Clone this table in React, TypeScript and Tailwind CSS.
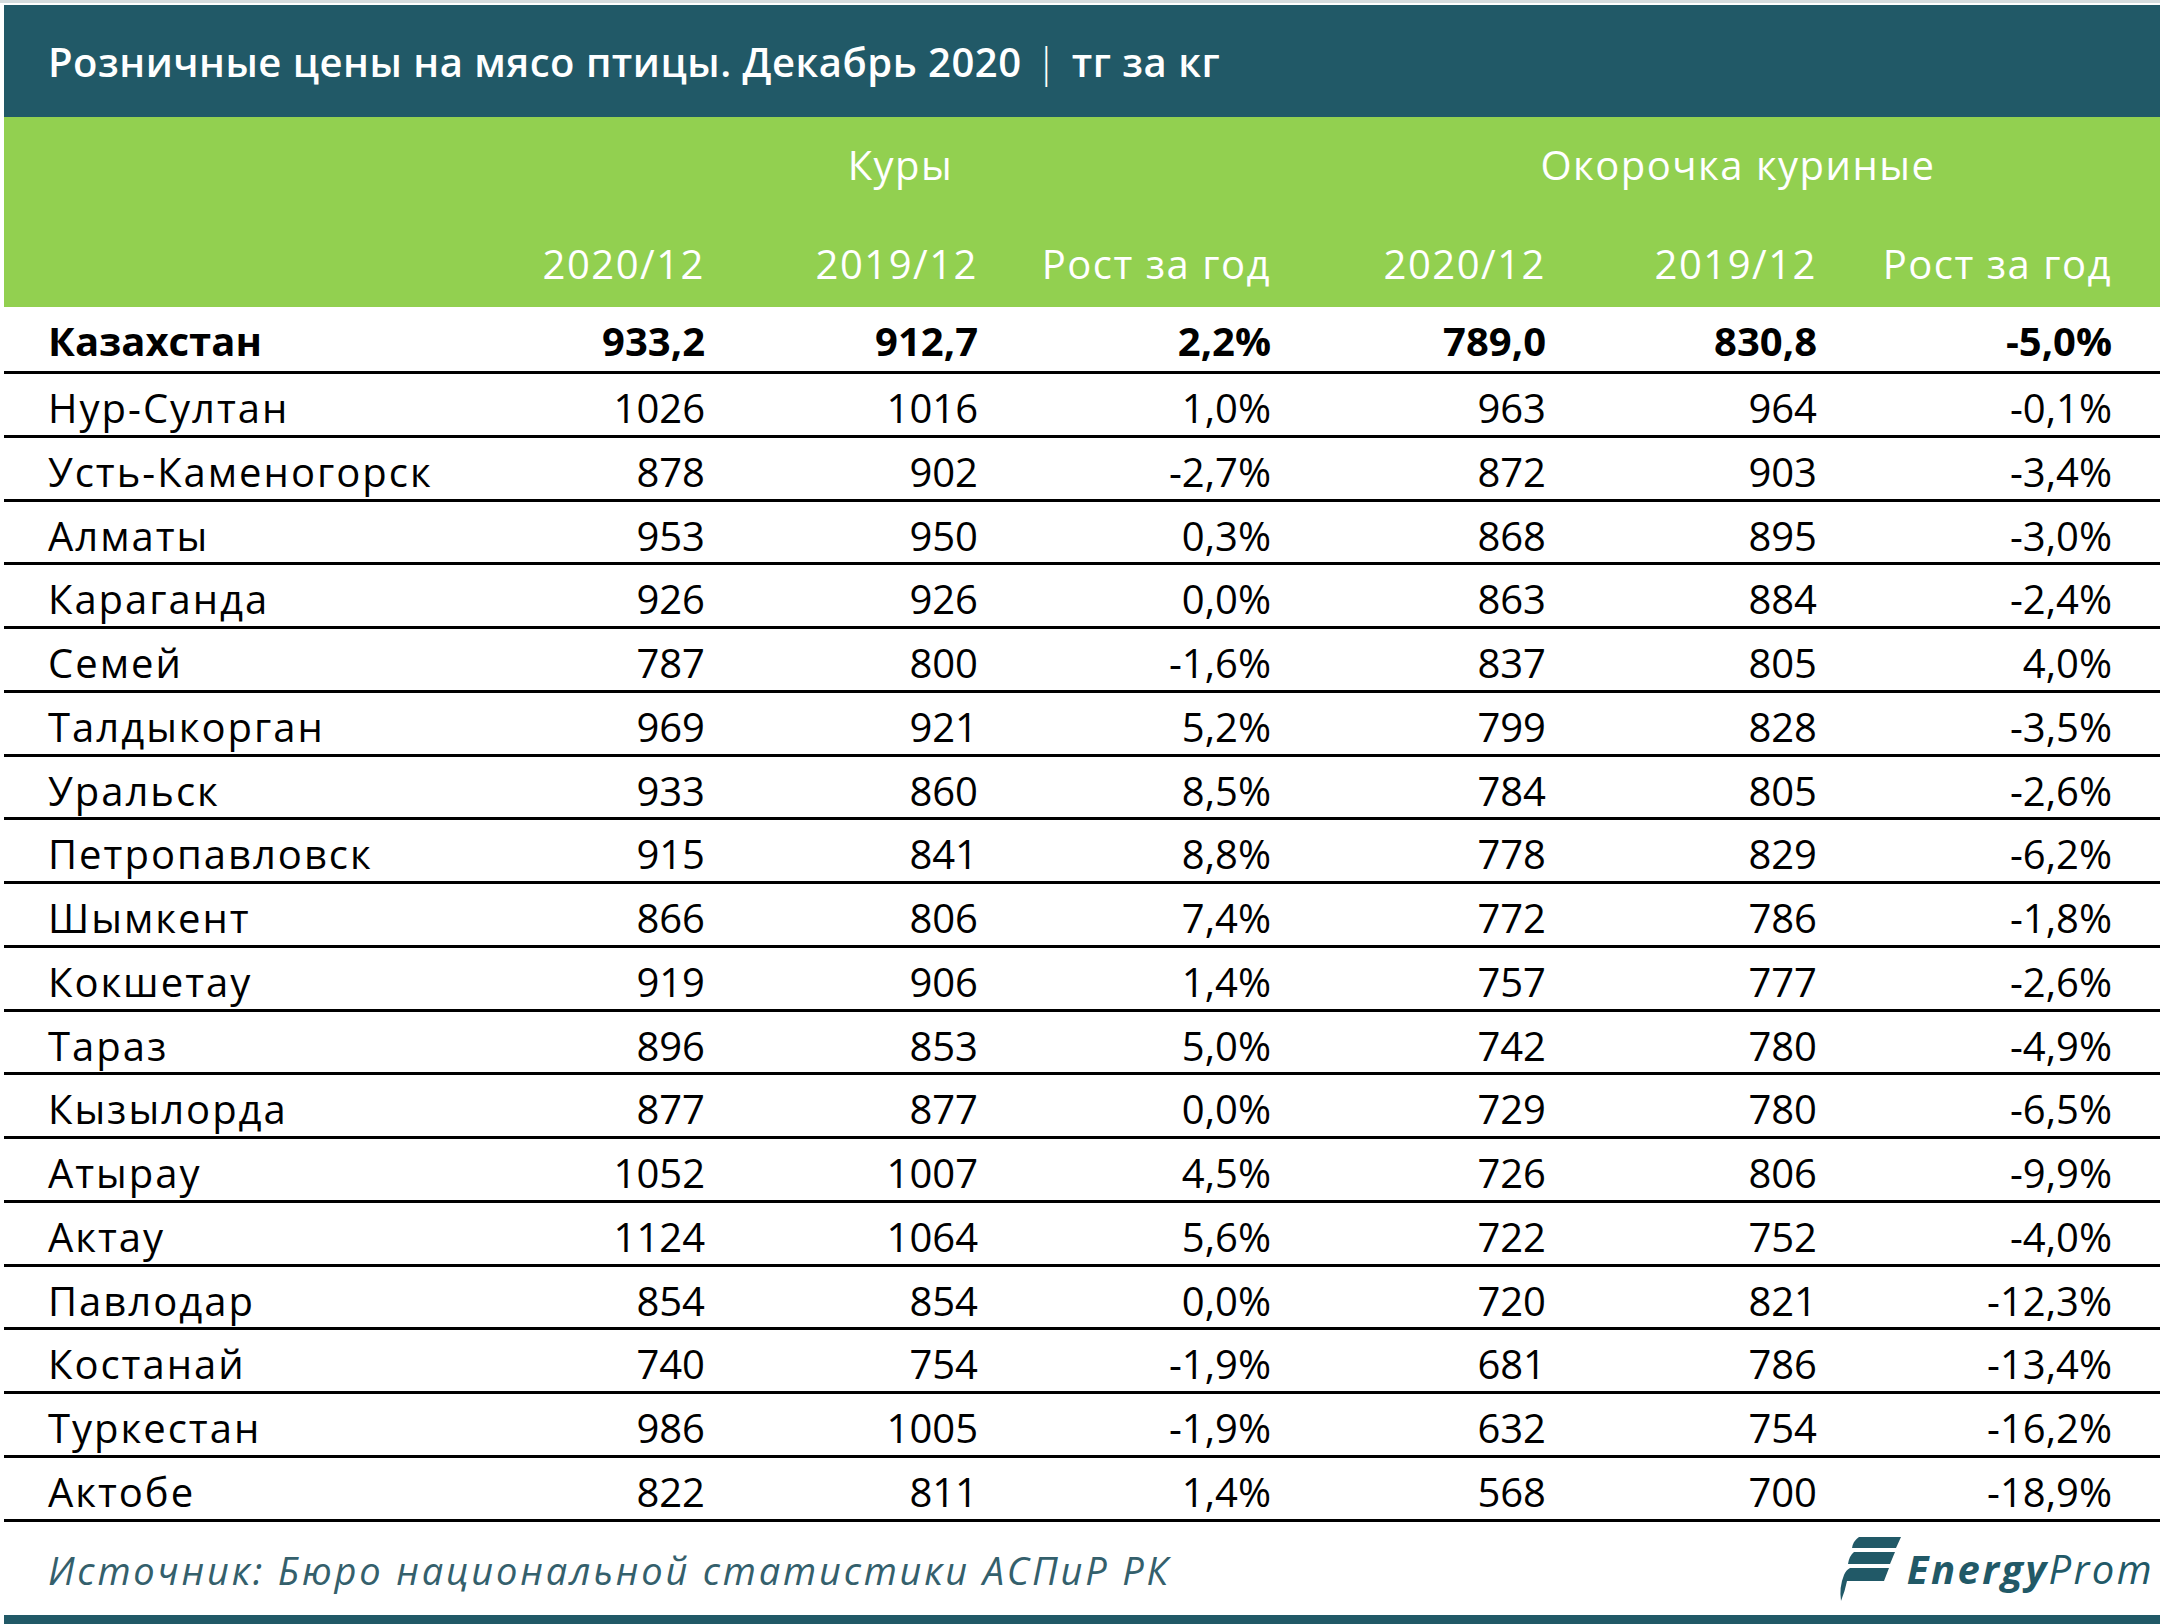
import React from 'react';

type Row = {
  name: string;
  cells: [string, string, string, string, string, string];
  bold?: boolean;
};

const rows: Row[] = [
  {name: 'Казахстан', cells: ['933,2', '912,7', '2,2%', '789,0', '830,8', '-5,0%'], bold: true},
  {name: 'Нур-Султан', cells: ['1026', '1016', '1,0%', '963', '964', '-0,1%']},
  {name: 'Усть-Каменогорск', cells: ['878', '902', '-2,7%', '872', '903', '-3,4%']},
  {name: 'Алматы', cells: ['953', '950', '0,3%', '868', '895', '-3,0%']},
  {name: 'Караганда', cells: ['926', '926', '0,0%', '863', '884', '-2,4%']},
  {name: 'Семей', cells: ['787', '800', '-1,6%', '837', '805', '4,0%']},
  {name: 'Талдыкорган', cells: ['969', '921', '5,2%', '799', '828', '-3,5%']},
  {name: 'Уральск', cells: ['933', '860', '8,5%', '784', '805', '-2,6%']},
  {name: 'Петропавловск', cells: ['915', '841', '8,8%', '778', '829', '-6,2%']},
  {name: 'Шымкент', cells: ['866', '806', '7,4%', '772', '786', '-1,8%']},
  {name: 'Кокшетау', cells: ['919', '906', '1,4%', '757', '777', '-2,6%']},
  {name: 'Тараз', cells: ['896', '853', '5,0%', '742', '780', '-4,9%']},
  {name: 'Кызылорда', cells: ['877', '877', '0,0%', '729', '780', '-6,5%']},
  {name: 'Атырау', cells: ['1052', '1007', '4,5%', '726', '806', '-9,9%']},
  {name: 'Актау', cells: ['1124', '1064', '5,6%', '722', '752', '-4,0%']},
  {name: 'Павлодар', cells: ['854', '854', '0,0%', '720', '821', '-12,3%']},
  {name: 'Костанай', cells: ['740', '754', '-1,9%', '681', '786', '-13,4%']},
  {name: 'Туркестан', cells: ['986', '1005', '-1,9%', '632', '754', '-16,2%']},
  {name: 'Актобе', cells: ['822', '811', '1,4%', '568', '700', '-18,9%']},
];

// name | 2020/12 | 2019/12 | рост | 2020/12 | 2019/12 | рост | pad
const cols = 'grid grid-cols-[456px_245px_273px_293px_275px_271px_295px_44px]';

function LogoMark() {
  return (
    <svg width="66" height="68" viewBox="0 0 66 68" className="shrink-0">
      <g fill="#215967">
        <path d="M20 2 L62 2 L57 13 L13 13 Q14 6 20 2 Z" />
        <path d="M15 17 L56 17 L51 29 L9 29 Q10 21 15 17 Z" />
        <path d="M11 33 L50 33 L45 46 L8 46 Q6 56 2 66 Q0 52 5 40 Q7 35 11 33 Z" />
      </g>
    </svg>
  );
}

export default function App() {
  return (
    <div className="w-[2160px] h-[1624px] bg-white overflow-hidden font-['Open_Sans',sans-serif] flex flex-col">
      <div className="h-[3px] bg-[#d5dcde]" />
      <div className="flex-1 flex flex-col pl-[4px] pt-[2px]">
        <div className="h-[112px] bg-[#215967] flex items-center pl-[44px] pt-[2px] text-white font-semibold text-[40px] tracking-[0.5px]">
          Розничные цены на мясо птицы. Декабрь 2020 <span className="font-light mx-[14px]">|</span> тг за кг
        </div>

        <div className="bg-[#92d050] text-white text-[40px] tracking-[1.5px] h-[190px] flex flex-col">
          <div className={`${cols} h-[96px] items-center`}>
            <div />
            <div className="col-span-3 text-center pl-[70px]">Куры</div>
            <div className="col-span-3 text-center pl-[93px]">Окорочка куриные</div>
            <div />
          </div>
          <div className={`${cols} h-[94px] items-center text-right pt-[8px]`}>
            <div />
            <div>2020/12</div>
            <div>2019/12</div>
            <div>Рост за год</div>
            <div>2020/12</div>
            <div>2019/12</div>
            <div>Рост за год</div>
            <div />
          </div>
        </div>

        <div className="text-black text-[40px]">
          {rows.map((r, i) => (
            <div
              key={r.name}
              className={`${cols} items-center border-b-[3px] border-black pt-[4px] ${
                i === 0 ? 'h-[67px] font-bold' : 'h-[63.78px]'
              }`}
            >
              <div
                className={`pl-[44px] whitespace-nowrap ${
                  i === 0 ? 'tracking-[0px]' : 'tracking-[2px]'
                }`}
              >
                {r.name}
              </div>
              {r.cells.map((c, j) => (
                <div key={j} className="text-right">
                  {c}
                </div>
              ))}
              <div />
            </div>
          ))}
        </div>

        <div className="flex-1 flex items-center justify-between pl-[44px] pr-[6px]">
          <div className="italic text-[38px] tracking-[2.8px] text-[#34606c] pt-[4px]">
            Источник: Бюро национальной статистики АСПиР РК
          </div>
          <div className="flex items-center gap-[2px] pt-[2px]">
            <LogoMark />
            <div className="italic text-[40px] text-[#215967] tracking-[2.4px] leading-none">
              <span className="font-bold">Energy</span>
              <span className="font-normal">Prom</span>
            </div>
          </div>
        </div>
        <div className="h-[9px] bg-[#215967]" />
      </div>
    </div>
  );
}
